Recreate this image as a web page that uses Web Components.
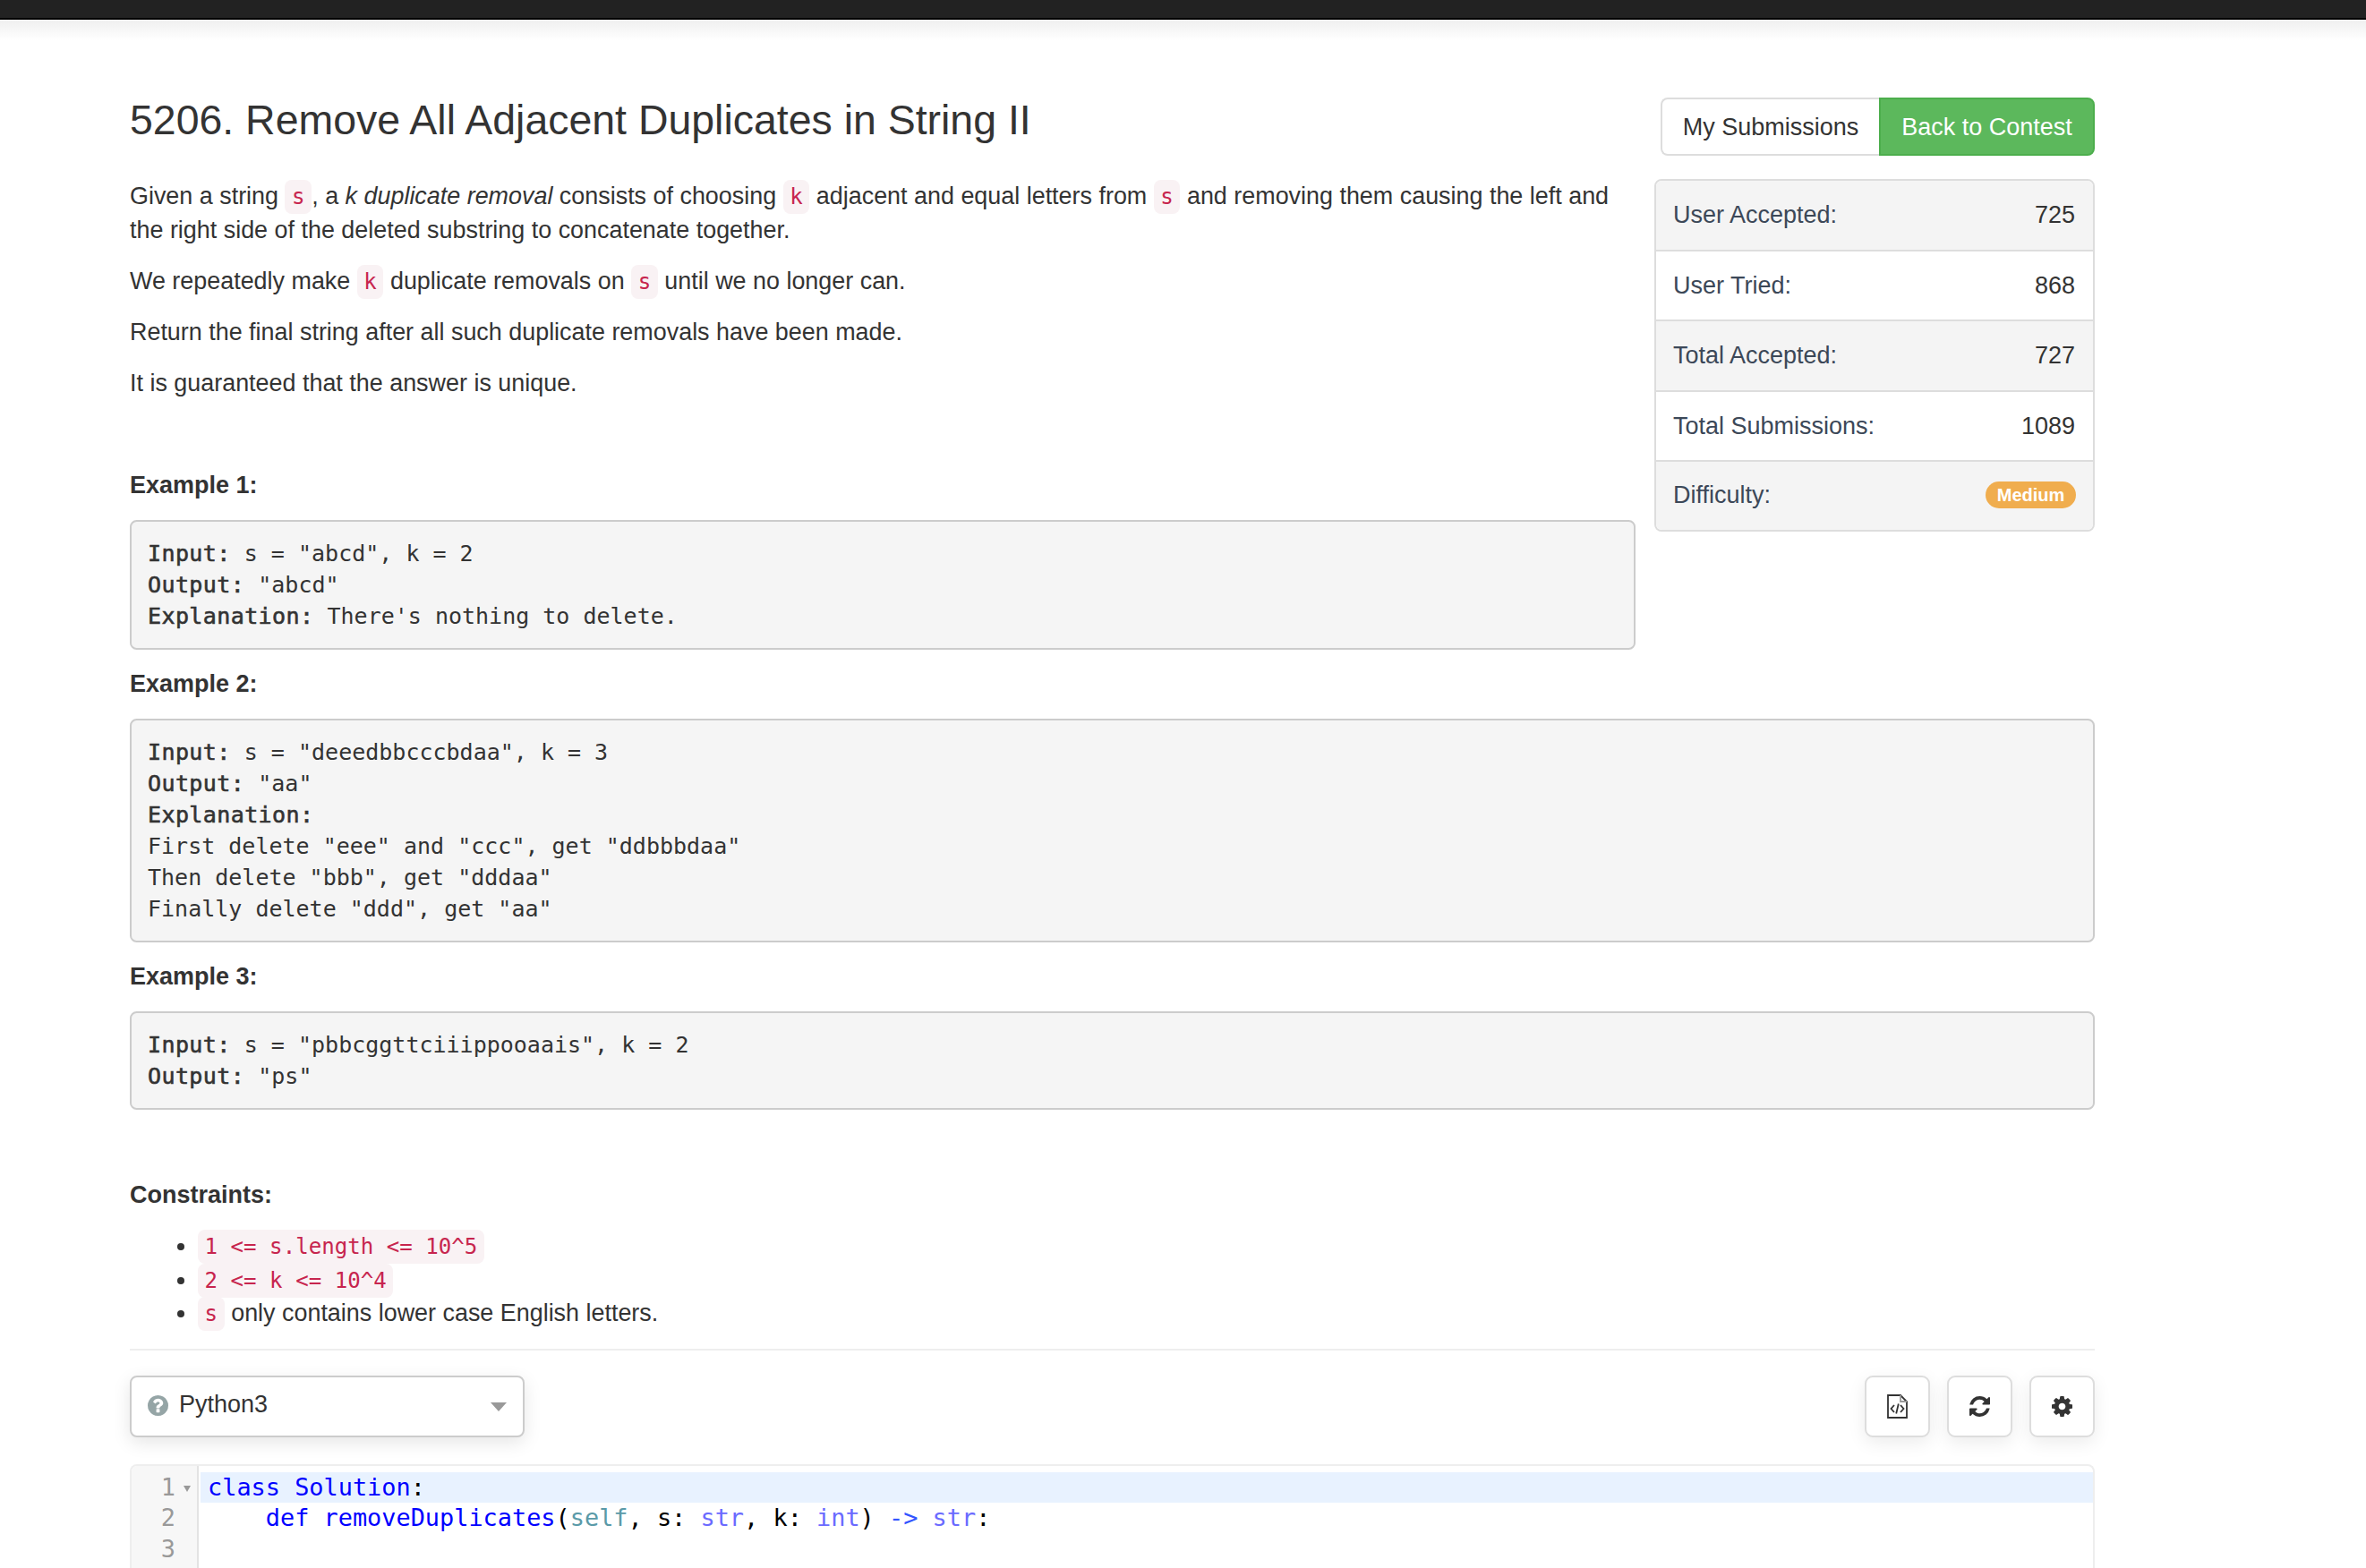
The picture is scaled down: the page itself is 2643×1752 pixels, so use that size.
<!DOCTYPE html>
<html lang="en"><head><meta charset="utf-8"><title>5206. Remove All Adjacent Duplicates in String II</title>
<style>
html,body{margin:0;padding:0;height:1752px;overflow:hidden;background:#fff}
body{font:27px/38px "Liberation Sans",Arial,sans-serif;color:#333}
</style></head><body>
<x-topbar></x-topbar>
<x-page>
  <x-problem-title slot="title">5206. Remove All Adjacent Duplicates in String II</x-problem-title>
  <x-para slot="desc">Given a string <x-code>s</x-code>, a <em>k duplicate removal</em> consists of choosing <x-code>k</x-code> adjacent and equal letters from <x-code>s</x-code> <span>and removing them causing the left and</span> <span>the right side of the deleted substring to concatenate together.</span></x-para>
  <x-para slot="desc">We repeatedly make <x-code>k</x-code> duplicate removals on <x-code>s</x-code> until we no longer can.</x-para>
  <x-para slot="desc">Return the final string after all such duplicate removals have been made.</x-para>
  <x-para slot="desc">It is guaranteed that the answer is unique.</x-para>
  <x-label slot="desc" style="margin-top:76px">Example 1:</x-label>
  <x-pre slot="desc"><b>Input:</b> s = "abcd", k = 2
<b>Output:</b> "abcd"
<b>Explanation:</b> There's nothing to delete.</x-pre>
  <x-actions slot="side"></x-actions>
  <x-stats slot="side">
    <x-stat label="User Accepted:" value="725" shade></x-stat>
    <x-stat label="User Tried:" value="868"></x-stat>
    <x-stat label="Total Accepted:" value="727" shade></x-stat>
    <x-stat label="Total Submissions:" value="1089"></x-stat>
    <x-stat label="Difficulty:" shade last><x-badge>Medium</x-badge></x-stat>
  </x-stats>
  <x-label>Example 2:</x-label>
  <x-pre><b>Input:</b> s = "deeedbbcccbdaa", k = 3
<b>Output:</b> "aa"
<b>Explanation:</b>
First delete "eee" and "ccc", get "ddbbbdaa"
Then delete "bbb", get "dddaa"
Finally delete "ddd", get "aa"</x-pre>
  <x-label>Example 3:</x-label>
  <x-pre><b>Input:</b> s = "pbbcggttciiippooaais", k = 2
<b>Output:</b> "ps"</x-pre>
  <x-label style="margin-top:76px;margin-bottom:20px">Constraints:</x-label>
  <x-list>
    <li><x-code>1 &lt;= s.length &lt;= 10^5</x-code></li>
    <li><x-code>2 &lt;= k &lt;= 10^4</x-code></li>
    <li><x-code>s</x-code> only contains lower case English letters.</li>
  </x-list>
  <x-toolbar></x-toolbar>
  <x-editor></x-editor>
</x-page>
<script>
const def=(name,html,init)=>customElements.define(name,class extends HTMLElement{
  constructor(){super();this.attachShadow({mode:'open'}).innerHTML=html;}
  connectedCallback(){if(init)init.call(this);}
});
const FA={
 refresh:'M1639 1056q0 5-1 7-64 268-268 434.5t-478 166.5q-146 0-282.5-55t-243.5-157l-129 129q-19 19-45 19t-45-19-19-45v-448q0-26 19-45t45-19h448q26 0 45 19t19 45-19 45l-137 137q71 66 161 102t187 36q134 0 250-65t186-179q11-17 53-117 8-23 30-23h192q13 0 22.5 9.5t9.5 22.5zm25-800v448q0 26-19 45t-45 19h-448q-26 0-45-19t-19-45 19-45l138-138q-148-137-349-137-134 0-250 65t-186 179q-11 17-53 117-8 23-30 23h-199q-13 0-22.5-9.5t-9.5-22.5v-7q65-268 270-434.5t480-166.5q146 0 284 55.5t245 156.5l130-129q19-19 45-19t45 19 19 45z',
 cog:'M1152 896q0-106-75-181t-181-75-181 75-75 181 75 181 181 75 181-75 75-181zm512-109v222q0 12-8 23t-20 13l-185 28q-19 54-39 91 35 50 107 138 10 12 10 25t-9 23q-27 37-99 108t-94 71q-12 0-26-9l-138-108q-44 23-91 38-16 136-29 186-7 28-36 28h-222q-14 0-24.5-8.5t-11.5-21.5l-28-184q-49-16-90-37l-141 107q-10 9-25 9-14 0-25-11-126-114-165-168-7-10-7-23 0-12 8-23 15-21 51-66.5t54-70.5q-27-50-41-99l-183-27q-13-2-21-12.5t-8-23.5v-222q0-12 8-23t19-13l186-28q14-46 39-92-40-57-107-138-10-12-10-24 0-10 9-23 26-36 98.5-107.5t94.5-71.5q13 0 26 10l138 107q44-23 91-38 16-136 29-186 7-28 36-28h222q14 0 24.5 8.5t11.5 21.5l28 184q49 16 90 37l142-107q9-9 24-9 13 0 25 10 129 119 165 170 7 8 7 22 0 12-8 23-15 21-51 66.5t-54 70.5q26 50 41 98l183 28q13 2 21 12.5t8 23.5z',
 question:'M1024 1376v-192q0-14-9-23t-23-9h-192q-14 0-23 9t-9 23v192q0 14 9 23t23 9h192q14 0 23-9t9-23zm256-672q0-88-55.5-163t-138.5-116-170-41q-243 0-371 213-15 24 8 42l132 100q7 6 19 6 16 0 25-12 53-68 86-92 34-24 86-24 48 0 85.5 26t37.5 59q0 38-20 61t-68 45q-63 28-115.5 86.5t-52.5 125.5v36q0 14 9 23t23 9h192q14 0 23-9t9-23q0-19 21.5-49.5t54.5-49.5q32-18 49-28.5t46-35 44.5-48 28-60.5 12.5-81zm384 192q0 209-103 385.5t-279.5 279.5-385.5 103-385.5-103-279.5-279.5-103-385.5 103-385.5 279.5-279.5 385.5-103 385.5 103 279.5 279.5 103 385.5z'
};
def('x-topbar',`<style>:host{display:block;height:45px;box-sizing:border-box;background:linear-gradient(#222 0 20px,#000 20px 22px,#efefef 22px,#fff 45px)}</style>`);
def('x-page',`<style>
:host{display:block;width:2195px;margin-left:145px;margin-top:-45px;padding-top:45px}
.top{display:grid;grid-template-columns:1682px 492px;column-gap:21px;}
.side{padding-top:64px}
.main{min-width:0}
</style>
<div class="top"><div class="main"><slot name="title"></slot><slot name="desc"></slot></div><div class="side"><slot name="side"></slot></div></div><slot></slot>`);
def('x-problem-title',`<style>:host{display:block;font-size:46.45px;line-height:50px;padding-top:64px;margin-bottom:41px;color:#333}</style><slot></slot>`);
def('x-para',`<style>:host{display:block;margin:0 0 19px;font-size:26.92px;line-height:38px}::slotted(em){font-style:italic}</style><slot></slot>`);
def('x-code',`<style>:host{display:inline;font:24.1px/1 "DejaVu Sans Mono",monospace;color:#c7254e;background:#f9f2f4;padding:5px 7.6px;border-radius:8px}</style><slot></slot>`);
def('x-label',`<style>:host{display:block;font-weight:700;font-size:27px;line-height:38px;margin:0 0 20px;color:#333}</style><slot></slot>`);
def('x-pre',`<style>:host{display:block;box-sizing:border-box;white-space:pre;font:25px/35px "DejaVu Sans Mono",monospace;color:#333;background:#f5f5f5;border:2px solid #ccc;border-radius:7.6px;padding:18px;margin:0 0 19px}
::slotted(b){font-weight:400;-webkit-text-stroke:.6px currentColor;letter-spacing:.4px}</style><slot></slot>`);
def('x-actions',`<style>:host{display:flex;justify-content:flex-end;margin-bottom:26px;font-size:27px;line-height:38px}
.b{box-sizing:border-box;height:65px;display:flex;align-items:center;justify-content:center}
.a{width:244px;border:2px solid #ddd;border-right:0;border-radius:8px 0 0 8px;color:#333;background:#fff}
.g{width:241px;background:#5cb85c;border:2px solid #4cae4c;color:#fff;border-radius:0 8px 8px 0}</style>
<div class="b a">My Submissions</div><div class="b g">Back to Contest</div>`);
def('x-stats',`<style>:host{display:block;box-sizing:border-box;border:2px solid #ddd;border-radius:8px;overflow:hidden;background:#fff}</style><slot></slot>`);
customElements.define('x-stat',class extends HTMLElement{
  constructor(){super();this.attachShadow({mode:'open'}).innerHTML=`<style>:host{display:flex;box-sizing:border-box;height:78.5px;align-items:center;justify-content:space-between;padding:0 20px 0 19px;border-bottom:2px solid #ddd;font-size:27px;line-height:38px}
  :host([shade]){background:#f4f4f4}:host([last]){border-bottom:0;height:76px;padding-bottom:2px;padding-right:19px}
  .l{color:#3c4858}.v{color:#333;display:flex}</style><span class="l"></span><span class="v"><slot></slot></span>`;}
  connectedCallback(){const s=this.shadowRoot;s.querySelector('.l').textContent=this.getAttribute('label');
    const v=this.getAttribute('value');if(v){s.querySelector('.v').textContent=v;}}
});
def('x-badge',`<style>:host{display:inline-flex;align-items:center;justify-content:center;box-sizing:border-box;width:101px;height:30px;border-radius:15px;background:#f0ad4e;color:#fff;font-weight:700;font-size:20px;line-height:1}</style><slot></slot>`);
def('x-list',`<style>:host{display:block;margin:0 0 20px;padding-left:76px;font-size:26.92px;line-height:37.7px}::slotted(li){display:list-item}</style><slot></slot>`);
def('x-toolbar',`<style>:host{display:flex;justify-content:space-between;align-items:flex-start;border-top:2px solid #eee;padding-top:28px;margin-top:0;height:99px;box-sizing:content-box}
.sel{box-sizing:border-box;width:441px;height:69px;border:2px solid #ccc;border-radius:8px;background:#fff;box-shadow:0 6px 20px rgba(0,0,0,.1);display:flex;align-items:center;padding:0 18px 0 18px;color:#333;font-size:27px}
.sel svg{width:23px;height:23px;margin:0 12px 3px 0;flex:none}
.sel .t{flex:1;position:relative;top:-3px}
.car{width:0;height:0;border-left:9.5px solid transparent;border-right:9.5px solid transparent;border-top:10px solid #999}
.btns{display:flex;gap:19px}
.ib{box-sizing:border-box;width:73px;height:69px;border:2px solid #ddd;border-radius:9px;background:#fff;box-shadow:0 6px 20px rgba(0,0,0,.08);display:flex;align-items:center;justify-content:center}
</style>
<div class="sel"><svg viewBox="128 128 1536 1536"><path fill="#95a5a6" d="${FA.question}"/></svg><span class="t">Python3</span><span class="car"></span></div>
<div class="btns">
<div class="ib"><svg width="23" height="27" viewBox="0 0 23 27" fill="none" stroke="#333" stroke-width="1.8"><path d="M1 1h14l7 7v18H1z"/><path d="M15 1v7h7" stroke="#999"/><path d="M8 12l-3.500 4 3.500 4M15 12l3.500 4-3.500 4M12.800 10.500l-2.600 11"/></svg></div>
<div class="ib"><svg width="23" height="23" viewBox="128 128 1536 1536"><path fill="#333" d="${FA.refresh}"/></svg></div>
<div class="ib"><svg width="23" height="23" viewBox="128 128 1536 1536"><path fill="#333" d="${FA.cog}"/></svg></div>
</div>`);
def('x-editor',`<style>:host{display:flex;box-sizing:border-box;height:200px;border:2px solid #eee;border-bottom:0;border-radius:8px 8px 0 0;margin-top:0;font:26.9px/34.3px "DejaVu Sans Mono",monospace;color:#000;overflow:hidden;background:#fff}
.g{width:75px;box-sizing:border-box;flex:none;background:#f7f7f7;border-right:2px solid #e3e3e3;padding-top:7px;color:#999}
.n{height:34.3px;display:flex;justify-content:flex-end;padding-right:24px;position:relative}
.f{position:absolute;right:7px;top:15px;width:0;height:0;border-left:4.500px solid transparent;border-right:4.500px solid transparent;border-top:7px solid #999}
.c{flex:1;padding-top:7px;margin-left:2px}
.l{height:34.3px;white-space:pre;padding-left:8px}
.a{background:#e8f2ff}
.k{color:#00f}.s{color:#5a9aa8}.t{color:#6a6aff}.o{color:#3355ff}</style>
<div class="g"><div class="n">1<span class="f"></span></div><div class="n">2</div><div class="n">3</div></div>
<div class="c"><div class="l a"><span class="k">class Solution</span>:</div><div class="l">    <span class="k">def removeDuplicates</span>(<span class="s">self</span>, s: <span class="t">str</span>, k: <span class="t">int</span>) <span class="o">-&gt;</span> <span class="t">str</span>:</div><div class="l"> </div></div>`);
</script>
</body></html>
